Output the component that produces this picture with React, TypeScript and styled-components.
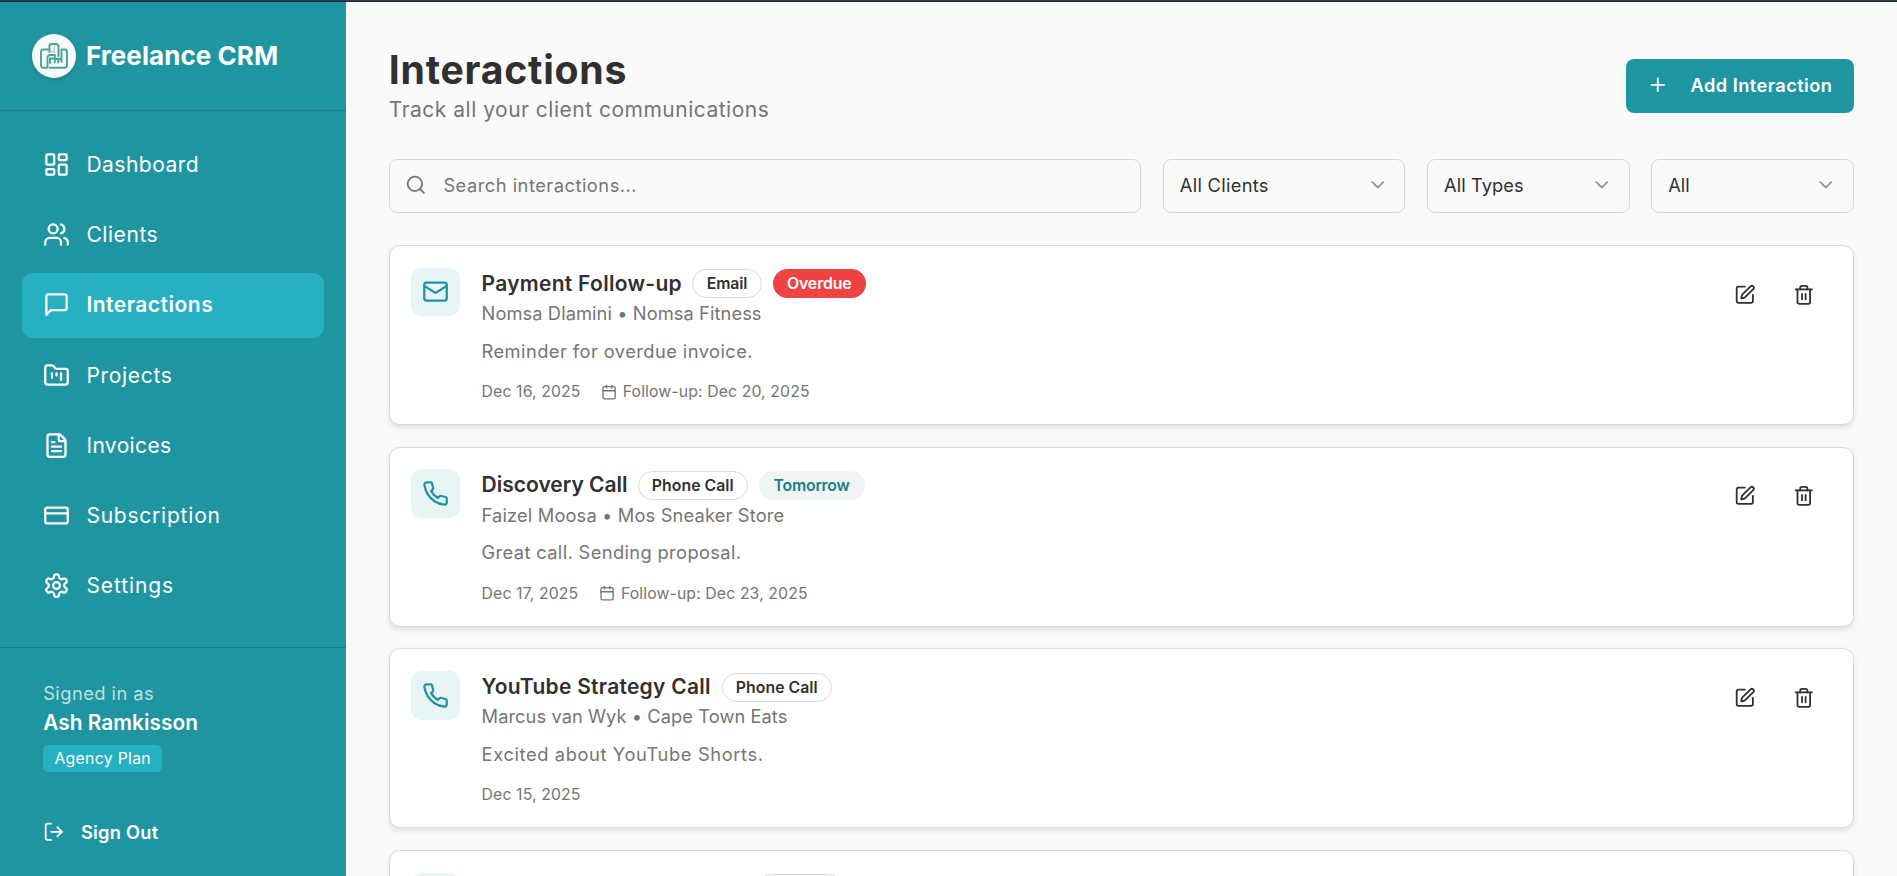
import React from "react";
import styled, { createGlobalStyle, css } from "styled-components";
import {
  Calendar,
  ChevronDown,
  CreditCard,
  FileText,
  FolderKanban,
  LayoutDashboard,
  LogOut,
  Plus,
  Search,
  SquarePen,
  Trash2,
  Users,
} from "lucide-react";

const color = {
  teal: "#2095a2",
  tealLight: "#27b0c2",
  tealDark: "#1a7c88",
  tint: "#e8f4f6",
  page: "#fafafa",
  border: "#d9d9d9",
  text: "#303030",
  muted: "#757575",
  danger: "#ef4343",
};

const GlobalStyle = createGlobalStyle`
  *, *::before, *::after { box-sizing: border-box; }
  html, body { margin: 0; padding: 0; height: 100%; overflow: hidden; }
  body {
    background: ${color.page};
    color: ${color.text};
    font-family: Inter, "Liberation Sans", sans-serif;
  }
  h1, h2, p { margin: 0; }
  button, input { font-family: inherit; }
  svg { flex-shrink: 0; }
`;

/* ---------- shell ---------- */

const Shell = styled.div`
  display: flex;
  height: 876px;
  overflow: hidden;
  border-top: 1px solid #3a3b3f;
  box-shadow: inset 0 1px 0 #1d2748;
  padding-top: 1px;
`;

const Sidebar = styled.aside`
  display: flex;
  flex-direction: column;
  flex: 0 0 346px;
  background: ${color.teal};
  color: #fff;
`;

const Brand = styled.div`
  display: flex;
  align-items: center;
  gap: 10px;
  height: 109px;
  padding: 0 32px;
  border-bottom: 1px solid ${color.tealDark};
`;

const BrandMark = styled.div`
  display: flex;
  align-items: center;
  justify-content: center;
  width: 44px;
  height: 44px;
  border-radius: 50%;
  background: ${color.page};
  box-shadow: 0 2px 5px rgba(0, 0, 0, 0.14);
`;

const BrandName = styled.span`
  font-size: 26px;
  font-weight: 700;
  line-height: 38px;
  letter-spacing: 0.06px;
  white-space: nowrap;
`;

const Nav = styled.nav`
  display: flex;
  flex: 1;
  flex-direction: column;
  gap: 5.4px;
  padding: 21.6px;
`;

const NavItem = styled.a<{ $active?: boolean; $track: number }>`
  display: flex;
  align-items: center;
  gap: 16.2px;
  height: 64.8px;
  padding: 0 21.6px 1px;
  border-radius: 10.8px;
  font-size: 21px;
  font-weight: ${(p) => (p.$active ? 600 : 400)};
  letter-spacing: ${(p) => p.$track}px;
  background: ${(p) => (p.$active ? color.tealLight : "transparent")};
`;

const Account = styled.div`
  display: flex;
  flex-direction: column;
  align-items: flex-start;
  height: 229px;
  padding: 32.4px 43.2px 20px;
  border-top: 1px solid ${color.tealDark};
`;

const AccountHint = styled.span`
  font-size: 18.3px;
  line-height: 27px;
  letter-spacing: 0.45px;
  color: rgba(255, 255, 255, 0.72);
`;

const AccountName = styled.span`
  font-size: 20.8px;
  font-weight: 600;
  line-height: 31.4px;
  letter-spacing: 0.06px;
`;

const PlanTag = styled.span`
  width: 119px;
  margin-top: 5.8px;
  border-radius: 5.4px;
  background: ${color.tealLight};
  font-size: 15.8px;
  line-height: 27px;
  letter-spacing: 0.3px;
  text-align: center;
`;

const SignOut = styled.button`
  display: flex;
  align-items: center;
  gap: 16.2px;
  height: 48.6px;
  margin-top: 36px;
  padding: 0;
  border: 0;
  background: none;
  color: #fff;
  font-size: 18.3px;
  font-weight: 600;
  letter-spacing: 0.24px;
`;

/* ---------- page header ---------- */

const Main = styled.main`
  flex: 1;
  min-width: 0;
  padding: 43.2px 43.2px 0 42.8px;
  overflow: hidden;
`;

const PageHeader = styled.header`
  display: flex;
  align-items: center;
  justify-content: space-between;
  height: 81px;
`;

const PageTitle = styled.h1`
  padding-top: 1px;
  font-size: 39.2px;
  font-weight: 700;
  line-height: 48.6px;
  letter-spacing: 0.76px;
`;

const PageSubtitle = styled.p`
  font-size: 21px;
  line-height: 32.4px;
  letter-spacing: 0.5px;
  color: ${color.muted};
`;

const PrimaryButton = styled.button`
  display: flex;
  align-items: center;
  gap: 21.6px;
  width: 228px;
  height: 54px;
  padding: 0 0 1px 21.6px;
  border: 0;
  border-radius: 8.1px;
  background: ${color.teal};
  color: #fff;
  font-size: 18.3px;
  font-weight: 600;
  letter-spacing: 0.42px;
  white-space: nowrap;
`;

/* ---------- filters ---------- */

const Filters = styled.div`
  display: flex;
  gap: 21.6px;
  margin: 32.4px 0;
`;

const control = css`
  display: flex;
  align-items: center;
  height: 54px;
  padding: 0 16px 1px;
  border: 1px solid ${color.border};
  border-radius: 8.1px;
  background: ${color.page};
  font-size: 18.3px;
`;

const SearchBox = styled.label`
  ${control}
  flex: 1;
  gap: 16.6px;
  padding-left: 15.4px;
  color: ${color.muted};
`;

const SearchInput = styled.input`
  flex: 1;
  padding: 0;
  border: 0;
  outline: 0;
  background: none;
  font-size: 18.3px;
  letter-spacing: 0.5px;

  &::placeholder {
    color: ${color.muted};
    opacity: 1;
  }
`;

const Select = styled.button<{ $width: number; $track: number }>`
  ${control}
  justify-content: space-between;
  width: ${(p) => p.$width}px;
  color: ${color.text};
  letter-spacing: ${(p) => p.$track}px;

  svg {
    opacity: 0.5;
  }
`;

/* ---------- interaction cards ---------- */

const List = styled.div`
  display: flex;
  flex-direction: column;
  gap: 21.6px;
`;

const Card = styled.article`
  display: flex;
  gap: 21.6px;
  height: 180.1px;
  padding: 21.6px;
  border: 1px solid ${color.border};
  border-radius: 10.8px;
  background: #fff;
  box-shadow: 0 2.7px 5.4px rgba(0, 0, 0, 0.1);
`;

const KindTile = styled.div`
  display: flex;
  align-items: center;
  justify-content: center;
  width: 48.6px;
  height: 48.6px;
  border-radius: 10.8px;
  background: ${color.tint};
  color: ${color.teal};
`;

const CardBody = styled.div`
  flex: 1;
  min-width: 0;
`;

const TitleRow = styled.div`
  display: flex;
  align-items: center;
  gap: 10.8px;
  height: 32.4px;
`;

const CardTitle = styled.h2<{ $width: number; $track: number }>`
  width: ${(p) => p.$width}px;
  font-size: 21px;
  font-weight: 600;
  line-height: 32.4px;
  letter-spacing: ${(p) => p.$track}px;
  white-space: nowrap;
`;

type Tone = "outline" | "danger" | "soft";

const tones = {
  outline: css`
    border: 1px solid ${color.border};
    color: ${color.text};
  `,
  danger: css`
    background: ${color.danger};
    color: #fff;
  `,
  soft: css`
    background: #eff4f5;
    color: #1a7c85;
  `,
};

const Badge = styled.span<{ $tone: Tone; $width: number; $track?: number }>`
  display: flex;
  align-items: center;
  justify-content: center;
  width: ${(p) => p.$width}px;
  height: 29px;
  border-radius: 15px;
  font-size: 15.8px;
  font-weight: 600;
  letter-spacing: ${(p) => p.$track ?? 0}px;
  white-space: nowrap;
  ${(p) => tones[p.$tone]}
`;

const Line = styled.p<{ $track: number; $spaced?: boolean }>`
  margin-top: ${(p) => (p.$spaced ? 10.8 : 0)}px;
  font-size: 18.3px;
  line-height: 27px;
  letter-spacing: ${(p) => p.$track}px;
  color: ${color.muted};
`;

const Meta = styled.div`
  display: flex;
  align-items: center;
  gap: 21.6px;
  margin-top: 16.2px;
  font-size: 15.8px;
  line-height: 21.6px;
  letter-spacing: 0.11px;
  color: ${color.muted};
  white-space: nowrap;
`;

const MetaDate = styled.span<{ $width: number }>`
  width: ${(p) => p.$width}px;
`;

const FollowUp = styled.span`
  display: flex;
  align-items: center;
  gap: 5.4px;
`;

const Actions = styled.div`
  display: flex;
  gap: 5.4px;
`;

const IconButton = styled.button`
  display: flex;
  align-items: center;
  justify-content: center;
  width: 54px;
  height: 54px;
  padding: 0;
  border: 0;
  background: none;
  color: ${color.text};
`;

/* ---------- icons ---------- */

type IconProps = { size: number };

const Glyph = ({ size, children }: IconProps & { children: React.ReactNode }) => (
  <svg
    width={size}
    height={size}
    viewBox="0 0 24 24"
    fill="none"
    stroke="currentColor"
    strokeWidth="2"
    strokeLinecap="round"
    strokeLinejoin="round"
  >
    {children}
  </svg>
);

const MessageIcon = ({ size }: IconProps) => (
  <Glyph size={size}>
    <path d="M21 15a2 2 0 0 1-2 2H7l-4 4V5a2 2 0 0 1 2-2h14a2 2 0 0 1 2 2z" />
  </Glyph>
);

const GearIcon = ({ size }: IconProps) => (
  <Glyph size={size}>
    <path d="M12.22 2h-.44a2 2 0 0 0-2 2v.18a2 2 0 0 1-1 1.73l-.43.25a2 2 0 0 1-2 0l-.15-.08a2 2 0 0 0-2.73.73l-.22.38a2 2 0 0 0 .73 2.73l.15.1a2 2 0 0 1 1 1.72v.51a2 2 0 0 1-1 1.74l-.15.09a2 2 0 0 0-.73 2.73l.22.38a2 2 0 0 0 2.73.73l.15-.08a2 2 0 0 1 2 0l.43.25a2 2 0 0 1 1 1.73V20a2 2 0 0 0 2 2h.44a2 2 0 0 0 2-2v-.18a2 2 0 0 1 1-1.73l.43-.25a2 2 0 0 1 2 0l.15.08a2 2 0 0 0 2.73-.73l.22-.39a2 2 0 0 0-.73-2.73l-.15-.08a2 2 0 0 1-1-1.74v-.5a2 2 0 0 1 1-1.74l.15-.09a2 2 0 0 0 .73-2.73l-.22-.38a2 2 0 0 0-2.73-.73l-.15.08a2 2 0 0 1-2 0l-.43-.25a2 2 0 0 1-1-1.73V4a2 2 0 0 0-2-2z" />
    <circle cx="12" cy="12" r="3" />
  </Glyph>
);

const MailIcon = ({ size }: IconProps) => (
  <Glyph size={size}>
    <rect width="20" height="16" x="2" y="4" rx="2" />
    <path d="m22 7-8.97 5.7a1.94 1.94 0 0 1-2.06 0L2 7" />
  </Glyph>
);

const PhoneIcon = ({ size }: IconProps) => (
  <Glyph size={size}>
    <path d="M22 16.92v3a2 2 0 0 1-2.18 2 19.79 19.79 0 0 1-8.63-3.07 19.5 19.5 0 0 1-6-6 19.79 19.79 0 0 1-3.07-8.67A2 2 0 0 1 4.11 2h3a2 2 0 0 1 2 1.72 12.84 12.84 0 0 0 .7 2.81 2 2 0 0 1-.45 2.11L8.09 9.91a16 16 0 0 0 6 6l1.27-1.27a2 2 0 0 1 2.11-.45 12.84 12.84 0 0 0 2.81.7A2 2 0 0 1 22 16.92z" />
  </Glyph>
);

const BriefcaseLogo = () => (
  <svg width="28" height="26" viewBox="0 0 28 26" fill="none" strokeLinecap="round" strokeLinejoin="round">
    <g stroke="#45a598" strokeWidth="1.9">
      <path d="M9 6.500H3.200A2.200 2.200 0 0 0 1 8.700V22.500A2.200 2.200 0 0 0 3.200 24.700H7.500V15a3 3 0 0 1 3-3h3.500" />
      <path d="M9.500 9V3.200A2.200 2.200 0 0 1 11.700 1h4.600a2.200 2.200 0 0 1 2.200 2.200V13.500" />
      <path d="M9.800 24.700H24.800A2.200 2.200 0 0 0 27 22.500V8.700A2.200 2.200 0 0 0 24.800 6.500H21.500V19" />
      <path d="M10 20v-4.500h4M14.800 12v7.500M14.800 16h6.500M18.300 16v3.500" />
    </g>
    <path d="M14.200 3.500V9h-3" stroke="#9bd0c8" strokeWidth="1.300" />
  </svg>
);

/* ---------- data ---------- */

const navItems = [
  { label: "Dashboard", Icon: LayoutDashboard, track: 0.5 },
  { label: "Clients", Icon: Users, track: 0.57 },
  { label: "Interactions", Icon: MessageIcon, track: 0.5, active: true },
  { label: "Projects", Icon: FolderKanban, track: 0.7 },
  { label: "Invoices", Icon: FileText, track: 0.38 },
  { label: "Subscription", Icon: CreditCard, track: 0.78 },
  { label: "Settings", Icon: GearIcon, track: 0.9 },
];

const filters = [
  { label: "All Clients", width: 242.6, track: 0.29 },
  { label: "All Types", width: 202.6, track: 0.08 },
  { label: "All", width: 202.6, track: 0 },
];

type BadgeData = { label: string; tone: Tone; width: number; track?: number };

interface Interaction {
  title: string;
  titleWidth: number;
  titleTrack: number;
  Icon: React.ComponentType<IconProps>;
  badges: BadgeData[];
  who: string;
  whoTrack: number;
  note: string;
  noteTrack: number;
  date: string;
  dateWidth: number;
  followUp?: string;
}

const phoneCall: BadgeData = { label: "Phone Call", tone: "outline", width: 110, track: 0.04 };

const interactions: Interaction[] = [
  {
    title: "Payment Follow-up",
    titleWidth: 199.6,
    titleTrack: 0.28,
    Icon: MailIcon,
    badges: [
      { label: "Email", tone: "outline", width: 70, track: -0.12 },
      { label: "Overdue", tone: "danger", width: 93, track: -0.08 },
    ],
    who: "Nomsa Dlamini • Nomsa Fitness",
    whoTrack: 0.08,
    note: "Reminder for overdue invoice.",
    noteTrack: 0.44,
    date: "Dec 16, 2025",
    dateWidth: 98,
    followUp: "Dec 20, 2025",
  },
  {
    title: "Discovery Call",
    titleWidth: 145.4,
    titleTrack: 0,
    Icon: PhoneIcon,
    badges: [phoneCall, { label: "Tomorrow", tone: "soft", width: 106, track: -0.2 }],
    who: "Faizel Moosa • Mos Sneaker Store",
    whoTrack: 0.15,
    note: "Great call. Sending proposal.",
    noteTrack: 0.37,
    date: "Dec 17, 2025",
    dateWidth: 96.2,
    followUp: "Dec 23, 2025",
  },
  {
    title: "YouTube Strategy Call",
    titleWidth: 229.4,
    titleTrack: 0.26,
    Icon: PhoneIcon,
    badges: [phoneCall],
    who: "Marcus van Wyk • Cape Town Eats",
    whoTrack: 0.06,
    note: "Excited about YouTube Shorts.",
    noteTrack: 0.62,
    date: "Dec 15, 2025",
    dateWidth: 98,
  },
  {
    title: "",
    titleWidth: 264.5,
    titleTrack: 0,
    Icon: PhoneIcon,
    badges: [{ label: "", tone: "outline", width: 86 }],
    who: "",
    whoTrack: 0,
    note: "",
    noteTrack: 0,
    date: "",
    dateWidth: 0,
  },
];

/* ---------- views ---------- */

const InteractionCard = ({ item }: { item: Interaction }) => (
  <Card>
    <KindTile>
      <item.Icon size={27} />
    </KindTile>
    <CardBody>
      <TitleRow>
        <CardTitle $width={item.titleWidth} $track={item.titleTrack}>
          {item.title}
        </CardTitle>
        {item.badges.map((b) => (
          <Badge key={b.label} $tone={b.tone} $width={b.width} $track={b.track}>
            {b.label}
          </Badge>
        ))}
      </TitleRow>
      <Line $track={item.whoTrack}>{item.who}</Line>
      <Line $track={item.noteTrack} $spaced>
        {item.note}
      </Line>
      <Meta>
        <MetaDate $width={item.dateWidth}>{item.date}</MetaDate>
        {item.followUp && (
          <FollowUp>
            <Calendar size={16.2} />
            <span>Follow-up: {item.followUp}</span>
          </FollowUp>
        )}
      </Meta>
    </CardBody>
    <Actions>
      <IconButton aria-label="Edit">
        <SquarePen size={21.6} />
      </IconButton>
      <IconButton aria-label="Delete">
        <Trash2 size={21.6} />
      </IconButton>
    </Actions>
  </Card>
);

export default function App() {
  return (
    <>
      <GlobalStyle />
      <Shell>
        <Sidebar>
          <Brand>
            <BrandMark>
              <BriefcaseLogo />
            </BrandMark>
            <BrandName>Freelance CRM</BrandName>
          </Brand>
          <Nav>
            {navItems.map(({ label, Icon, track, active }) => (
              <NavItem key={label} $active={active} $track={track}>
                <Icon size={27} />
                {label}
              </NavItem>
            ))}
          </Nav>
          <Account>
            <AccountHint>Signed in as</AccountHint>
            <AccountName>Ash Ramkisson</AccountName>
            <PlanTag>Agency Plan</PlanTag>
            <SignOut>
              <LogOut size={21.6} />
              Sign Out
            </SignOut>
          </Account>
        </Sidebar>
        <Main>
          <PageHeader>
            <div>
              <PageTitle>Interactions</PageTitle>
              <PageSubtitle>Track all your client communications</PageSubtitle>
            </div>
            <PrimaryButton>
              <Plus size={21.6} />
              Add Interaction
            </PrimaryButton>
          </PageHeader>
          <Filters>
            <SearchBox>
              <Search size={21.6} />
              <SearchInput placeholder="Search interactions..." />
            </SearchBox>
            {filters.map((f) => (
              <Select key={f.label} $width={f.width} $track={f.track}>
                {f.label}
                <ChevronDown size={21.6} />
              </Select>
            ))}
          </Filters>
          <List>
            {interactions.map((item, i) => (
              <InteractionCard key={i} item={item} />
            ))}
          </List>
        </Main>
      </Shell>
    </>
  );
}
